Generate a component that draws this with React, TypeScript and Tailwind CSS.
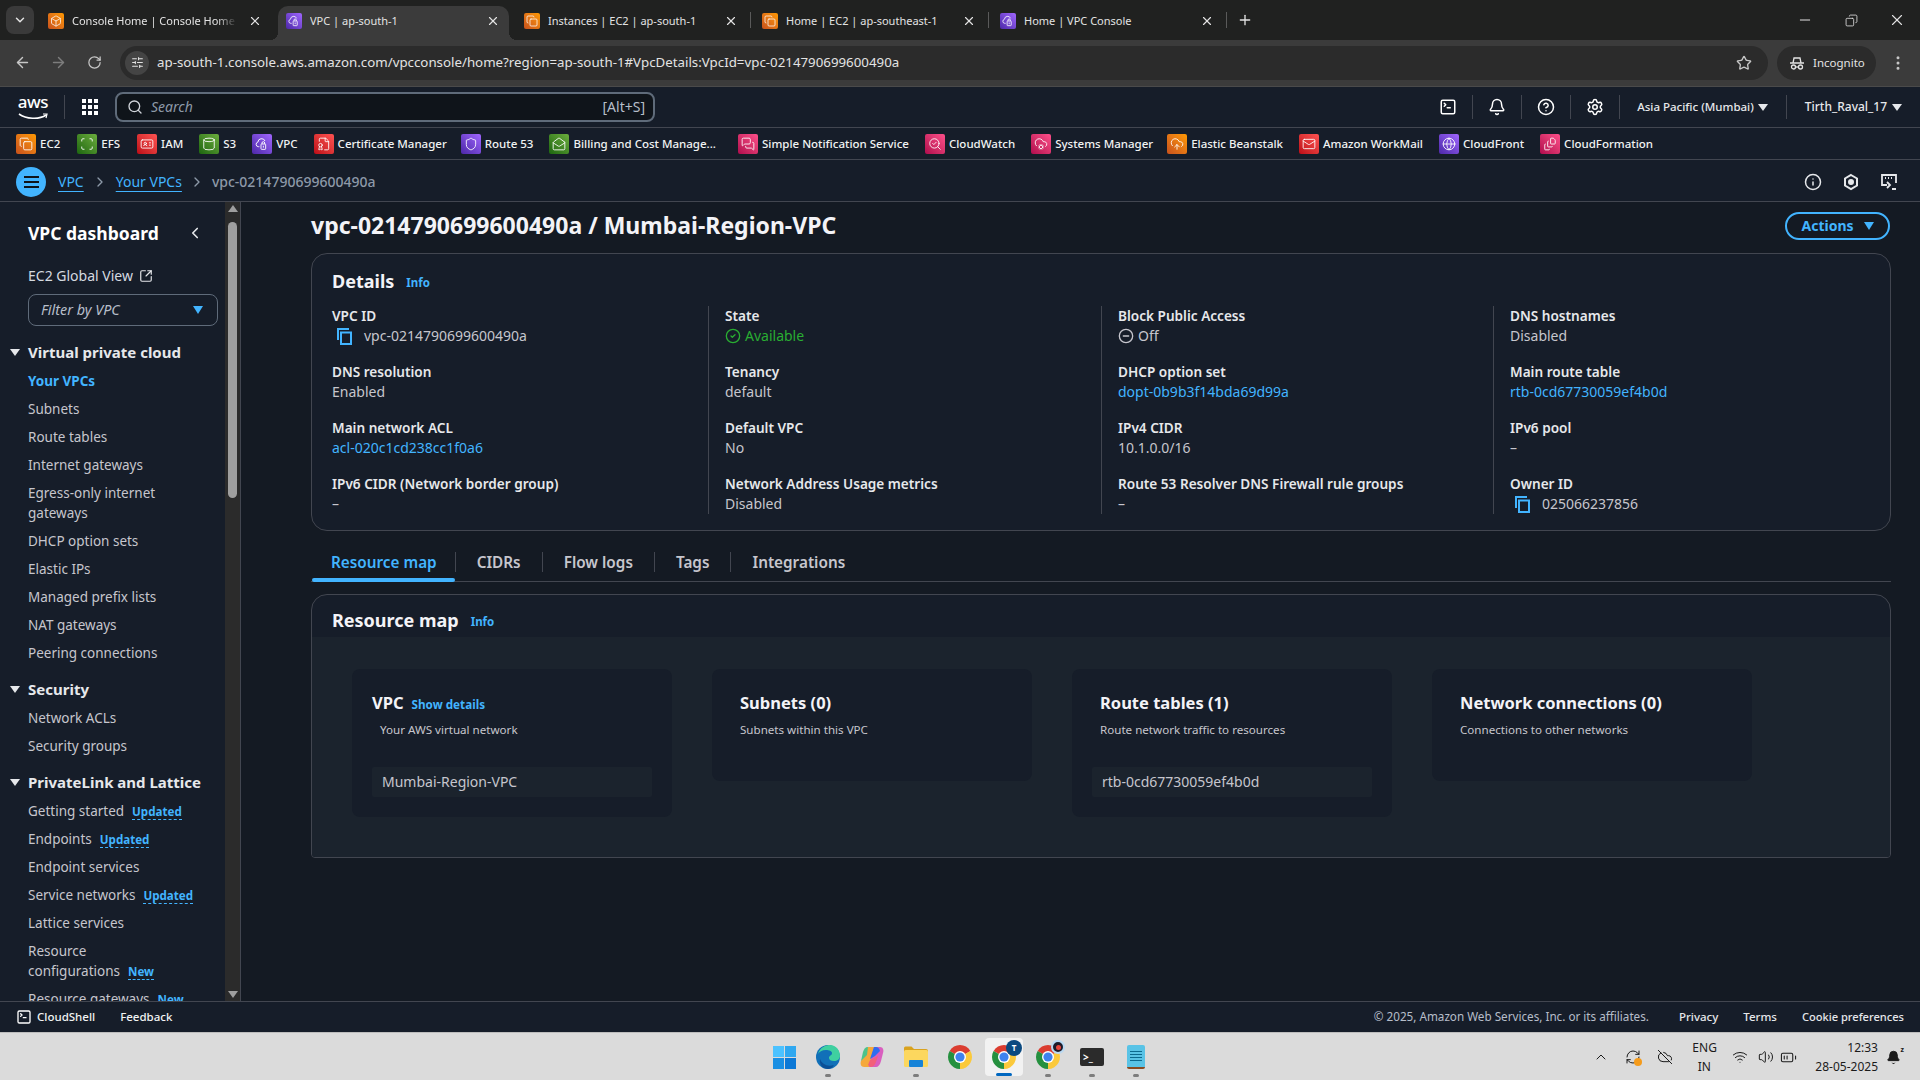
import type { ReactNode } from "react";
import {
  ArrowLeft,
  ArrowRight,
  Bell,
  Box,
  ChevronDown,
  ChevronLeft,
  ChevronRight,
  ChevronUp,
  CircleCheck,
  CircleHelp,
  CircleMinus,
  CloudCog,
  CloudUpload,
  Copy,
  FileBadge,
  FileStack,
  Globe,
  IdCard,
  Info,
  Mail,
  MailOpen,
  MessagesSquare,
  Minus,
  Plus,
  RotateCw,
  Scan,
  Search,
  SearchCheck,
  Settings,
  Shield,
  SlidersHorizontal,
  SquareArrowOutUpRight,
  SquareTerminal,
  Star,
  Volume2,
  Wifi,
  X,
  Cylinder,
  EllipsisVertical,
  BatteryMedium,
  RefreshCw,
  CloudOff,
} from "lucide-react";

const ORANGE = "bg-linear-to-tr from-[#c8511b] to-[#ff9900]";
const GREEN = "bg-linear-to-tr from-[#1b660f] to-[#6cae3e]";
const RED = "bg-linear-to-tr from-[#bd0816] to-[#ff5252]";
const PURPLE = "bg-linear-to-tr from-[#4d27a8] to-[#a166ff]";
const PINK = "bg-linear-to-tr from-[#b0084d] to-[#ff4f8b]";

function VpcGlyph({ size }: { size: number }) {
  return (
    <svg width={size} height={size} viewBox="0 0 24 24" fill="none" stroke="white" strokeWidth="1.4">
      <path d="M8 16H6.5a3.5 3.5 0 0 1-.6-6.9A5.5 5.5 0 0 1 16.5 7.5" />
      <rect x="10.5" y="12" width="7" height="8" rx="1" />
      <path d="M12 12v-1.5a2 2 0 0 1 4 0V12M14 14.5v3" />
    </svg>
  );
}

function ServiceIcon({ color, glyph, small }: { color: string; glyph: ReactNode; small?: boolean }) {
  return (
    <span className={`flex shrink-0 items-center justify-center rounded-[2px] ${color} ${small ? "h-4 w-4" : "h-5 w-5"}`}>
      {glyph}
    </span>
  );
}

const g = { color: "white", strokeWidth: 1.5 };

const bookmarks = [
  { label: "EC2", color: ORANGE, glyph: <Copy size={14} {...g} />, extra: "mr-px" },
  { label: "EFS", color: GREEN, glyph: <Scan size={14} {...g} />, extra: "mr-px" },
  { label: "IAM", color: RED, glyph: <IdCard size={14} {...g} /> },
  { label: "S3", color: GREEN, glyph: <Cylinder size={14} {...g} /> },
  { label: "VPC", color: PURPLE, glyph: <VpcGlyph size={16} /> },
  { label: "Certificate Manager", color: RED, glyph: <FileBadge size={14} {...g} />, extra: "-mr-[2px]" },
  { label: "Route 53", color: PURPLE, glyph: <Shield size={14} {...g} /> },
  { label: "Billing and Cost Manage...", color: GREEN, glyph: <MailOpen size={14} {...g} />, extra: "mr-[6px]" },
  { label: "Simple Notification Service", color: PINK, glyph: <MessagesSquare size={14} {...g} /> },
  { label: "CloudWatch", color: PINK, glyph: <SearchCheck size={14} {...g} /> },
  { label: "Systems Manager", color: PINK, glyph: <CloudCog size={14} {...g} />, extra: "-mr-[2px]" },
  { label: "Elastic Beanstalk", color: ORANGE, glyph: <CloudUpload size={14} {...g} /> },
  { label: "Amazon WorkMail", color: RED, glyph: <Mail size={14} {...g} /> },
  { label: "CloudFront", color: PURPLE, glyph: <Globe size={14} {...g} /> },
  { label: "CloudFormation", color: PINK, glyph: <FileStack size={14} {...g} /> },
];

const tabs = [
  { title: "Console Home | Console Home", color: ORANGE, glyph: <Box size={12} {...g} /> },
  { title: "VPC | ap-south-1", color: PURPLE, glyph: <VpcGlyph size={14} />, active: true },
  { title: "Instances | EC2 | ap-south-1", color: ORANGE, glyph: <Copy size={12} {...g} /> },
  { title: "Home | EC2 | ap-southeast-1", color: ORANGE, glyph: <Copy size={12} {...g} /> },
  { title: "Home | VPC Console", color: PURPLE, glyph: <VpcGlyph size={14} /> },
];

function Triangle({ className }: { className: string }) {
  return <span className={`inline-block h-0 w-0 border-x-[5px] border-t-[7px] border-x-transparent ${className}`} />;
}

function TabStrip() {
  return (
    <div className="flex h-10 items-start bg-[#202120] pl-[6px]">
      <div className="mt-[6px] mr-1 flex h-7 w-7 items-center justify-center rounded-lg bg-[#3a3a3a]">
        <ChevronDown size={14} color="#e3e3e3" strokeWidth={2.5} />
      </div>
      {tabs.map((t, i) => (
        <div key={t.title} className="relative h-10 w-[238px]">
          {t.active && (
            <>
              <div className="absolute top-[6px] bottom-0 left-[2px] w-[231px] rounded-t-[10px] bg-[#3b3b3b]" />
              <span className="absolute bottom-0 -left-[6px] h-2 w-2 bg-[radial-gradient(circle_at_0_0,#202120_8px,#3b3b3b_8px)]" />
              <span className="absolute right-[-3px] bottom-0 h-2 w-2 bg-[radial-gradient(circle_at_100%_0,#202120_8px,#3b3b3b_8px)]" />
            </>
          )}
          <div className="relative flex h-full items-center pt-[2px] pl-[10px]">
            <ServiceIcon color={t.color} glyph={t.glyph} small />
            <span
              className={`ml-2 w-[165px] overflow-hidden text-[11px] whitespace-nowrap text-[#e3e3e3] ${
                i === 0 ? "[mask-image:linear-gradient(to_right,black_88%,transparent)]" : ""
              }`}
            >
              {t.title}
            </span>
            <X size={14} color="#e3e3e3" className="absolute right-[14px]" />
          </div>
          {i > 1 && <span className="absolute top-[12px] right-[1px] h-4 w-px bg-[#5a5a5a]" />}
        </div>
      ))}
      <Plus size={16} color="#e3e3e3" className="mt-3 ml-[9px]" />
      <div className="ml-auto flex h-10 items-center">
        <Minus size={16} color="#e3e3e3" strokeWidth={1.5} />
        <Copy size={13} color="#e3e3e3" strokeWidth={1.5} className="ml-[32px] -scale-x-100" />
        <X size={18} color="#e3e3e3" strokeWidth={1.5} className="mr-[14px] ml-[30px]" />
      </div>
    </div>
  );
}

function Toolbar() {
  return (
    <div className="flex h-[47px] items-center border-b border-[#4a4a4a] bg-[#3b3b3b] pb-px">
      <ArrowLeft size={17} color="#c7c7c7" className="ml-[14px]" />
      <ArrowRight size={17} color="#7d7d7d" className="ml-[19px]" />
      <RotateCw size={15} color="#c7c7c7" className="ml-[20px]" />
      <div className="ml-[18px] flex h-[34px] w-[1648px] items-center rounded-full bg-[#2b2b2b] pl-[5px]">
        <span className="flex h-6 w-6 items-center justify-center rounded-full bg-[#444]">
          <SlidersHorizontal size={13} color="#e3e3e3" />
        </span>
        <span className="ml-2 text-[13.3px] whitespace-nowrap text-[#e3e3e3]">
          ap-south-1.console.aws.amazon.com/vpcconsole/home?region=ap-south-1#VpcDetails:VpcId=vpc-0214790699600490a
        </span>
        <Star size={16} color="#c7c7c7" className="mr-4 ml-auto" />
      </div>
      <div className="ml-[9px] flex h-[34px] w-[99px] items-center gap-2 rounded-full bg-[#2b2b2b] pl-3">
        <svg width="16" height="16" viewBox="0 0 16 16" fill="none" stroke="#e3e3e3" strokeWidth="1.3">
          <path d="M1 8h14M4 8l1-5h6l1 5" />
          <circle cx="4.5" cy="12" r="2" />
          <circle cx="11.5" cy="12" r="2" />
          <path d="M6.5 12h3" />
        </svg>
        <span className="text-[11.5px] text-[#e3e3e3]">Incognito</span>
      </div>
      <EllipsisVertical size={18} color="#c7c7c7" className="ml-[13px]" />
    </div>
  );
}

function HeaderSep() {
  return <span className="block h-6 w-px bg-[#424650]" />;
}

function AwsHeader() {
  return (
    <div className="flex h-10 items-center bg-[#161d29] pl-[18px]">
      <div className="relative flex h-7 w-[30px] flex-col items-center text-white">
        <span className="text-[17px] leading-[18px] font-medium tracking-tight">aws</span>
        <svg width="30" height="8" viewBox="0 0 30 8" fill="none" className="absolute bottom-0 left-0">
          <path d="M1 1c7 5 20 6 27 1" stroke="white" strokeWidth="1.6" />
          <path d="M25 1h4l-1 4" stroke="white" strokeWidth="1.2" />
        </svg>
      </div>
      <span className="ml-4 h-6 w-px bg-[#424650]" />
      <div className="ml-[17px] grid grid-cols-3 gap-[2px]">
        {Array.from({ length: 9 }).map((_, i) => (
          <span key={i} className="h-[4px] w-[4px] bg-white" />
        ))}
      </div>
      <div className="ml-[17px] flex h-[30px] w-[540px] items-center rounded-lg border-2 border-[#5f6b7a] bg-[#0f141a] pr-2 pl-[10px]">
        <Search size={16} color="#d1d5db" />
        <span className="ml-2 text-sm text-[#8d99a8] italic">Search</span>
        <span className="ml-auto text-sm text-[#b6bec9]">[Alt+S]</span>
      </div>
      <div className="ml-auto flex items-center">
        <SquareTerminal size={18} color="white" strokeWidth={2} />
        <span className="ml-[15px]"><HeaderSep /></span>
        <Bell size={18} color="white" strokeWidth={2} className="mx-[15px]" />
        <HeaderSep />
        <CircleHelp size={18} color="white" strokeWidth={2} className="mx-[15px]" />
        <HeaderSep />
        <Settings size={18} color="white" strokeWidth={2} className="mx-[15px]" />
        <HeaderSep />
        <span className="ml-[17px] text-[11.5px] font-medium whitespace-nowrap text-[#e6e8eb]">Asia Pacific (Mumbai)</span>
        <Triangle className="mr-[18px] ml-[4px] border-t-[#e6e8eb]" />
        <HeaderSep />
        <span className="ml-[18px] text-xs font-medium whitespace-nowrap text-[#e6e8eb]">Tirth_Raval_17</span>
        <Triangle className="mr-[18px] ml-[5px] border-t-[#e6e8eb]" />
      </div>
    </div>
  );
}

function BookmarkBar() {
  return (
    <div className="flex h-[33px] items-center gap-4 border-y border-[#424650] bg-[#161d29] pl-4">
      {bookmarks.map((b) => (
        <div key={b.label} className={`flex items-center gap-1 ${b.extra ?? ""}`}>
          <ServiceIcon color={b.color} glyph={b.glyph} />
          <span className="text-[11.5px] font-medium whitespace-nowrap text-[#f1f3f3]">{b.label}</span>
        </div>
      ))}
    </div>
  );
}

function BreadcrumbBar() {
  return (
    <div className="flex h-[42px] items-center border-b border-[#424650] bg-[#161d29] pt-[2px] pl-4">
      <span className="flex h-[30px] w-[30px] items-center justify-center rounded-full bg-[#42b4ff]">
        <span className="flex flex-col gap-[3px]">
          <span className="h-[2px] w-[15px] bg-[#0f141a]" />
          <span className="h-[2px] w-[15px] bg-[#0f141a]" />
          <span className="h-[2px] w-[15px] bg-[#0f141a]" />
        </span>
      </span>
      <span className="ml-3 text-sm text-[#42b4ff] underline underline-offset-4">VPC</span>
      <ChevronRight size={16} color="#8d99a8" className="mx-2" />
      <span className="text-sm text-[#42b4ff] underline underline-offset-4">Your VPCs</span>
      <ChevronRight size={16} color="#8d99a8" className="mx-[7px]" />
      <span className="text-sm font-medium text-[#8d99a8]">vpc-0214790699600490a</span>
      <div className="mr-[22px] ml-auto flex items-center gap-[20px]">
        <Info size={18} color="#e6e8eb" />
        <svg width="18" height="18" viewBox="0 0 18 18" fill="none" stroke="#e6e8eb" strokeWidth="2">
          <path d="M9 2l6 3.5v7L9 16l-6-3.5v-7z" />
          <circle cx="9" cy="9" r="2" fill="#e6e8eb" />
        </svg>
        <svg width="18" height="18" viewBox="0 0 18 18" fill="none" stroke="#e6e8eb" strokeWidth="1.8">
          <path d="M7 12H2V2h14v8" />
          <path d="M5 5h1M8 5h1M11 5h1M7 9l3 3-3 3M12 16h4" />
        </svg>
      </div>
    </div>
  );
}

type NavItem = { label: ReactNode; badge?: string; active?: boolean };

const navSections: { title: string; items: NavItem[] }[] = [
  {
    title: "Virtual private cloud",
    items: [
      { label: "Your VPCs", active: true },
      { label: "Subnets" },
      { label: "Route tables" },
      { label: "Internet gateways" },
      {
        label: (
          <>
            Egress-only internet
            <br />
            gateways
          </>
        ),
      },
      { label: "DHCP option sets" },
      { label: "Elastic IPs" },
      { label: "Managed prefix lists" },
      { label: "NAT gateways" },
      { label: "Peering connections" },
    ],
  },
  { title: "Security", items: [{ label: "Network ACLs" }, { label: "Security groups" }] },
  {
    title: "PrivateLink and Lattice",
    items: [
      { label: "Getting started", badge: "Updated" },
      { label: "Endpoints", badge: "Updated" },
      { label: "Endpoint services" },
      { label: "Service networks", badge: "Updated" },
      { label: "Lattice services" },
      {
        label: (
          <>
            Resource
            <br />
            configurations
          </>
        ),
        badge: "New",
      },
      { label: "Resource gateways", badge: "New" },
    ],
  },
];

function Sidebar() {
  return (
    <aside className="flex h-full w-[241px] shrink-0 border-r border-[#424650] bg-[#161d29]">
      <div className="h-full w-[225px] overflow-hidden">
        <div className="mt-[19px] flex h-[24px] items-center justify-between pr-[21px] pl-7">
          <span className="text-[17.5px] leading-6 font-bold text-white">VPC dashboard</span>
          <ChevronLeft size={18} color="#e6e8eb" strokeWidth={2.2} />
        </div>
        <div className="mt-[21px] flex items-center gap-[6px] pl-7">
          <span className="text-sm leading-5 text-[#d5dae0]">EC2 Global View</span>
          <SquareArrowOutUpRight size={14} color="#e6e8eb" strokeWidth={2} />
        </div>
        <div className="mt-2 ml-7 flex h-8 w-[190px] items-center justify-between rounded-lg border border-[#5f6b7a] pr-[14px] pl-3">
          <span className="text-[14.4px] text-[#b6bec9] italic">Filter by VPC</span>
          <span className="inline-block h-0 w-0 border-x-[5px] border-t-[8px] border-x-transparent border-t-[#42b4ff]" />
        </div>
        {navSections.map((s, i) => (
          <div key={s.title} className={i === 0 ? "mt-[14px]" : "mt-[10px]"}>
            <div className="flex h-6 items-center pl-[10px]">
              <Triangle className="mr-2 border-t-[#e6e8eb]" />
              <span className="text-[15px] font-bold text-[#e6e8eb]">{s.title}</span>
            </div>
            <div className="mt-[3px]">
              {s.items.map((it, j) => (
                <div key={j} className="py-1 pl-7 text-[13.5px] leading-5">
                  <span className={it.active ? "font-bold text-[#42b4ff]" : "text-[#c6c6cd]"}>{it.label}</span>
                  {it.badge && (
                    <span className="ml-2 border-b border-dashed border-[#42b4ff] text-[11.6px] leading-4 font-bold text-[#42b4ff]">
                      {it.badge}
                    </span>
                  )}
                </div>
              ))}
            </div>
          </div>
        ))}
      </div>
      <div className="flex h-full w-[15px] flex-col items-center bg-[#2b2b2b] pt-[3px]">
        <span className="h-0 w-0 border-x-[5px] border-b-[7px] border-x-transparent border-b-[#9f9f9f]" />
        <span className="mt-[10px] h-[276px] w-[9px] rounded-full bg-[#9f9f9f]" />
        <span className="mt-auto mb-[3px] h-0 w-0 border-x-[5px] border-t-[7px] border-x-transparent border-t-[#9f9f9f]" />
      </div>
    </aside>
  );
}

function CopyIcon() {
  return (
    <svg width="17" height="18" viewBox="0 0 17 18" fill="none" stroke="#42b4ff" strokeWidth="2" className="ml-1 shrink-0">
      <path d="M2 13V2h11" />
      <rect x="5" y="5.5" width="10" height="11.5" />
    </svg>
  );
}

function Field({ label, children }: { label: string; children: ReactNode }) {
  return (
    <div>
      <div className="text-[13.6px] leading-5 font-semibold whitespace-nowrap text-[#e6e8eb]">{label}</div>
      <div className="flex h-5 items-center text-sm leading-5 text-[#c6c6cd]">{children}</div>
    </div>
  );
}

function DLink({ children }: { children: ReactNode }) {
  return <span className="text-[#42b4ff]">{children}</span>;
}

function DetailColumn({ first, children }: { first?: boolean; children: ReactNode }) {
  return <div className={`flex flex-col gap-4 ${first ? "" : "border-l border-[#424650] pl-4"}`}>{children}</div>;
}

function DetailsCard() {
  return (
    <section className="rounded-2xl border border-[#424650] bg-[#161d29] pt-[13px] pr-5 pb-[16px] pl-5">
      <div className="flex h-7 items-center">
        <h2 className="text-lg font-bold text-[#f3f3f7]">Details</h2>
        <span className="mt-1 ml-3 text-[11.5px] font-bold text-[#42b4ff]">Info</span>
      </div>
      <div className="mt-[11px] grid grid-cols-[376px_393px_392px_1fr]">
        <DetailColumn first>
          <Field label="VPC ID">
            <CopyIcon />
            <span className="ml-[11px]">vpc-0214790699600490a</span>
          </Field>
          <Field label="DNS resolution">Enabled</Field>
          <Field label="Main network ACL">
            <DLink>acl-020c1cd238cc1f0a6</DLink>
          </Field>
          <Field label="IPv6 CIDR (Network border group)">–</Field>
        </DetailColumn>
        <DetailColumn>
          <Field label="State">
            <CircleCheck size={16} color="#29ad32" className="mr-[4px]" />
            <span className="text-[#29ad32]">Available</span>
          </Field>
          <Field label="Tenancy">default</Field>
          <Field label="Default VPC">No</Field>
          <Field label="Network Address Usage metrics">Disabled</Field>
        </DetailColumn>
        <DetailColumn>
          <Field label="Block Public Access">
            <CircleMinus size={16} color="#c6c6cd" className="mr-[4px]" />
            Off
          </Field>
          <Field label="DHCP option set">
            <DLink>dopt-0b9b3f14bda69d99a</DLink>
          </Field>
          <Field label="IPv4 CIDR">10.1.0.0/16</Field>
          <Field label="Route 53 Resolver DNS Firewall rule groups">–</Field>
        </DetailColumn>
        <DetailColumn>
          <Field label="DNS hostnames">Disabled</Field>
          <Field label="Main route table">
            <DLink>rtb-0cd67730059ef4b0d</DLink>
          </Field>
          <Field label="IPv6 pool">–</Field>
          <Field label="Owner ID">
            <CopyIcon />
            <span className="ml-[11px]">025066237856</span>
          </Field>
        </DetailColumn>
      </div>
    </section>
  );
}

function TabsRow() {
  const items = ["Resource map", "CIDRs", "Flow logs", "Tags", "Integrations"];
  return (
    <div className="mt-[14px] flex h-[37px] items-center border-b border-[#424650] pb-[3px]">
      {items.map((t, i) => (
        <div key={t} className="relative flex items-center">
          <span
            className={`text-[15.3px] leading-6 font-semibold ${
              i === 0 ? "pr-[18px] pl-5 text-[#42b4ff]" : "px-[21px] text-[#c6c6cd]"
            }`}
          >
            {t}
          </span>
          {i < items.length - 1 && <span className="h-5 w-px bg-[#424650]" />}
          {i === 0 && <span className="absolute -bottom-[8px] left-px h-1 w-[143px] rounded-full bg-[#42b4ff]" />}
        </div>
      ))}
    </div>
  );
}

function MapCard({ title, link, desc, item }: { title: string; link?: string; desc: string; item?: string }) {
  return (
    <div className={`w-[320px] rounded-lg bg-[#161d29] px-5 pt-[22px] ${item ? "pb-5" : "pb-[43px]"}`}>
      <div className={`flex h-6 items-center ${link ? "" : "ml-2"}`}>
        <span className="text-[16.5px] font-bold text-[#f3f3f7]">{title}</span>
        {link && <span className="mt-1 ml-2 text-[11.7px] font-bold text-[#42b4ff]">{link}</span>}
      </div>
      <p className="mt-[7px] ml-2 text-[11.6px] leading-4 text-[#c6c6cd]">{desc}</p>
      {item && (
        <div className="mt-[29px] flex h-[30px] items-center rounded-[2px] bg-[#1b232d] pl-[10px] text-sm text-[#c6c6cd]">{item}</div>
      )}
    </div>
  );
}

function ResourceMap() {
  return (
    <section className="mt-3 overflow-hidden rounded-t-2xl rounded-b-[4px] border border-[#424650] bg-[#161d29]">
      <div className="flex h-[42px] items-center pt-2 pl-5">
        <h2 className="text-lg font-bold text-[#f3f3f7]">Resource map</h2>
        <span className="mt-1 ml-3 text-[11.5px] font-bold text-[#42b4ff]">Info</span>
      </div>
      <div className="flex items-start gap-10 bg-[#1b232d] px-10 pt-8 pb-10">
        <MapCard title="VPC" link="Show details" desc="Your AWS virtual network" item="Mumbai-Region-VPC" />
        <MapCard title="Subnets (0)" desc="Subnets within this VPC" />
        <MapCard title="Route tables (1)" desc="Route network traffic to resources" item="rtb-0cd67730059ef4b0d" />
        <MapCard title="Network connections (0)" desc="Connections to other networks" />
      </div>
    </section>
  );
}

function Footer() {
  return (
    <div className="relative flex h-[31px] items-center border-t border-[#424650] bg-[#161d29] pl-4 text-[11.5px]">
      <SquareTerminal size={16} color="white" strokeWidth={2} />
      <span className="ml-[5px] font-medium text-[#f1f3f3]">CloudShell</span>
      <span className="ml-[25px] font-medium text-[#f1f3f3]">Feedback</span>
      <span className="ml-auto text-[11.7px] text-[#b6bec9]">© 2025, Amazon Web Services, Inc. or its affiliates.</span>
      <span className="ml-[30px] font-medium text-[#e6e8eb]">Privacy</span>
      <span className="ml-[25px] font-medium text-[#e6e8eb]">Terms</span>
      <span className="mr-4 ml-[25px] text-[11.1px] font-medium text-[#e6e8eb]">Cookie preferences</span>
    </div>
  );
}

function ChromeIcon() {
  return (
    <svg width="24" height="24" viewBox="0 0 24 24">
      <path d="M12 12L1.61 6A12 12 0 0 1 22.39 6Z" fill="#db3d30" />
      <path d="M12 12L22.39 6A12 12 0 0 1 12 24Z" fill="#fbc93b" />
      <path d="M12 12L12 24A12 12 0 0 1 1.61 6Z" fill="#25903f" />
      <circle cx="12" cy="12" r="6" fill="white" />
      <circle cx="12" cy="12" r="4.6" fill="#3f82ee" />
    </svg>
  );
}

function TaskItem({ children, dot, active }: { children: ReactNode; dot?: boolean; active?: boolean }) {
  return (
    <div className="relative flex h-[48px] w-[44px] items-center justify-center">
      {active && <span className="absolute top-[5px] left-[3px] h-[38px] w-[38px] rounded bg-[#f2f2f2]" />}
      <span className="relative">{children}</span>
      {dot && <span className="absolute bottom-[4px] left-[19px] h-[3px] w-[6px] rounded-full bg-[#7d7d7d]" />}
      {active && <span className="absolute bottom-[5px] left-[14px] h-[3px] w-4 rounded-full bg-[#0067c0]" />}
    </div>
  );
}

function Taskbar() {
  return (
    <div className="grid h-12 grid-cols-[1fr_auto_1fr] border-t border-[#bdbdbd] bg-[#dbdbdb]">
      <div />
      <div className="flex">
        <TaskItem>
          <span className="grid grid-cols-2 gap-[1px]">
            <span className="h-[11px] w-[11px] bg-[#4cc2ff]" />
            <span className="h-[11px] w-[11px] bg-[#30a8f0]" />
            <span className="h-[11px] w-[11px] bg-[#1a8fe3]" />
            <span className="h-[11px] w-[11px] bg-[#0c78d6]" />
          </span>
        </TaskItem>
        <TaskItem dot>
          <svg width="24" height="24" viewBox="0 0 24 24">
            <circle cx="12" cy="12" r="12" fill="#1170b8" />
            <path d="M2 9C4 2 10 0 14 0c6 0 10 5 10 11 0 3-3 5-6 5-3 0-5-1-5-3 0-3 3-2 3-5 0-2-3-3-6-3C6 5 3 7 2 9z" fill="#3fd0a0" />
            <path d="M12 24c-5 0-9-4-8-10 2 5 7 8 14 6-2 3-4 4-6 4z" fill="#0b4f96" />
          </svg>
        </TaskItem>
        <TaskItem>
          <svg width="24" height="24" viewBox="0 0 24 24">
            <path d="M8 2h7l-5 20H4c-3 0-4-3-3-6z" fill="#f5a93b" />
            <path d="M8 2c-3 0-4 2-5 5l-2 9 6-6z" fill="#4cc38a" />
            <path d="M16 22H9l5-20h6c3 0 4 3 3 6l-2 8c-1 4-3 6-5 6z" fill="#d95fbf" />
            <path d="M16 2h-2l-4 12 5-3 5-5c-1-3-2-4-4-4z" fill="#2f6df0" />
            <path d="M10 22c3 0 5-2 6-5l2-6-8 4-2 5z" fill="#f2607a" />
          </svg>
        </TaskItem>
        <TaskItem dot>
          <svg width="24" height="22" viewBox="0 0 24 22">
            <path d="M0 2a1.5 1.5 0 0 1 1.5-1.5h6l2.5 2.5h12A2 2 0 0 1 24 5v2H0z" fill="#d9a21e" />
            <rect y="4" width="24" height="17" rx="1.5" fill="#fcd75e" />
            <rect x="5" y="14" width="14" height="7" rx="1" fill="#1683d8" />
          </svg>
        </TaskItem>
        <TaskItem>
          <ChromeIcon />
        </TaskItem>
        <TaskItem active>
          <ChromeIcon />
          <span className="absolute -top-[5px] -right-[6px] flex h-4 w-4 items-center justify-center rounded-full bg-[#0b4a80] text-[8px] font-bold text-white">
            T
          </span>
        </TaskItem>
        <TaskItem dot>
          <ChromeIcon />
          <span className="absolute -top-[5px] -right-[5px] flex h-[14px] w-[14px] items-center justify-center rounded-full border-2 border-[#b9d9f2] bg-[#1d1d2b]">
            <span className="h-[5px] w-[5px] rounded-full bg-[#e8453c]" />
          </span>
        </TaskItem>
        <TaskItem dot>
          <span className="block h-[18px] w-6 overflow-hidden rounded-[2px] bg-[#2b2b2b]">
            <span className="flex h-full items-center pl-[3px] text-[10px] leading-none font-bold text-white">&gt;_</span>
          </span>
        </TaskItem>
        <TaskItem dot>
          <span className="flex h-6 w-[18px] flex-col items-stretch justify-center gap-[2px] rounded-[2px] border-b-2 border-[#8a4b22] bg-[#59c3e6] px-[3px]">
            <span className="h-px bg-[#0c6a8f]" />
            <span className="h-px bg-[#0c6a8f]" />
            <span className="h-px bg-[#0c6a8f]" />
            <span className="h-px bg-[#0c6a8f]" />
          </span>
        </TaskItem>
      </div>
      <div className="flex items-center justify-end pr-[19px] text-[#1b1b1b]">
        <ChevronUp size={16} strokeWidth={1.5} />
        <span className="relative ml-[16px]">
          <RefreshCw size={16} strokeWidth={1.5} />
          <span className="absolute -right-[1px] -bottom-[1px] h-2 w-2 rounded-full bg-[#f59b1b]" />
        </span>
        <CloudOff size={16} strokeWidth={1.5} className="ml-[16px]" />
        <span className="ml-[19px] w-[24px] text-center text-xs leading-[19px]">
          ENG
          <br />
          IN
        </span>
        <Wifi size={16} strokeWidth={1.5} className="ml-[16px]" />
        <Volume2 size={16} strokeWidth={1.5} className="ml-[10px]" />
        <BatteryMedium size={17} strokeWidth={1.5} className="ml-[6px]" />
        <span className="ml-[18px] text-right text-xs leading-[19px]">
          12:33
          <br />
          28-05-2025
        </span>
        <span className="relative ml-[8px]">
          <Bell size={15} strokeWidth={1.5} fill="#1b1b1b" />
          <span className="absolute -top-[4px] -right-[3px] text-[7px] leading-none font-bold">z</span>
        </span>
      </div>
    </div>
  );
}

export default function App() {
  return (
    <div className="flex h-[1080px] w-[1920px] flex-col overflow-hidden bg-[#141a23] font-['Noto_Sans',sans-serif]">
      <TabStrip />
      <Toolbar />
      <AwsHeader />
      <BookmarkBar />
      <BreadcrumbBar />
      <div className="flex min-h-0 flex-1">
        <Sidebar />
        <main className="min-w-0 flex-1 pr-[29px] pl-[70px]">
          <div className="flex h-[51px] items-center justify-between pr-px">
            <h1 className="mt-[-4px] text-[23px] font-bold whitespace-nowrap text-[#f3f3f7]">
              vpc-0214790699600490a / Mumbai-Region-VPC
            </h1>
            <button className="mt-[-4px] flex h-7 w-[105px] items-center justify-center gap-[10px] rounded-full border-2 border-[#42b4ff] text-sm font-bold text-[#42b4ff]">
              Actions
              <span className="h-0 w-0 border-x-[5px] border-t-[8px] border-x-transparent border-t-[#42b4ff]" />
            </button>
          </div>
          <DetailsCard />
          <TabsRow />
          <ResourceMap />
        </main>
      </div>
      <Footer />
      <Taskbar />
    </div>
  );
}
